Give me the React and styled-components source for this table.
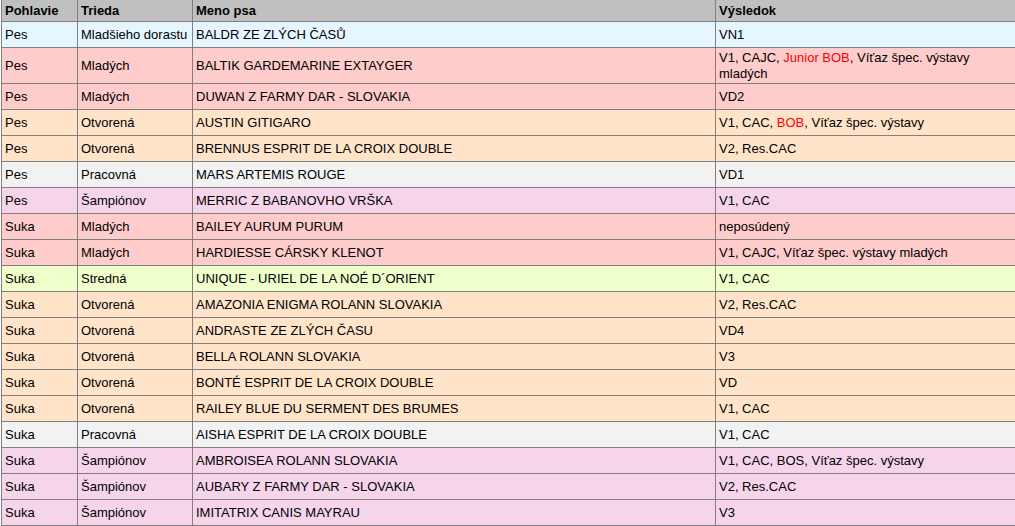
import React from "react";
import styled, { createGlobalStyle } from "styled-components";

const GlobalStyle = createGlobalStyle`
  html, body {
    margin: 0;
    padding: 0;
    background: #ffffff;
    overflow: hidden;
  }
  body {
    font-family: "Liberation Sans", Arial, sans-serif;
    font-size: 13px;
    color: #000;
  }
`;

const Wrapper = styled.div`
  padding-left: 1px;
  margin-top: -1px;
`;

const Table = styled.table`
  border-collapse: collapse;
  table-layout: fixed;
  width: 1016px;
`;

const HeadCell = styled.th`
  background-color: #c0c0c0;
  border: 1px solid #808080;
  text-align: left;
  font-weight: bold;
  padding: 2px 3px;
  height: 17px;
  line-height: 15px;
`;

const Row = styled.tr`
  background-color: ${(props) => props.$bg};
`;

const Cell = styled.td`
  border: 1px solid #808080;
  padding: 2px 3px;
  height: 21px;
  line-height: 15.5px;
  vertical-align: middle;
`;

const Red = styled.span`
  color: #ff0000;
`;

const colors = {
  blue: "#e5f6ff",
  pink: "#ffcccc",
  orange: "#ffe4ca",
  gray: "#f2f2f2",
  lilac: "#f6d5eb",
  green: "#efffcc",
};

const classColor = {
  "Mladšieho dorastu": colors.blue,
  "Mladých": colors.pink,
  "Otvorená": colors.orange,
  "Pracovná": colors.gray,
  "Šampiónov": colors.lilac,
  "Stredná": colors.green,
};

const rows = [
  ["Pes", "Mladšieho dorastu", "BALDR ZE ZLÝCH ČASŮ", "VN1"],
  ["Pes", "Mladých", "BALTIK GARDEMARINE EXTAYGER", <>V1, CAJC, <Red>Junior BOB</Red>, Víťaz špec. výstavy mladých</>],
  ["Pes", "Mladých", "DUWAN Z FARMY DAR - SLOVAKIA", "VD2"],
  ["Pes", "Otvorená", "AUSTIN GITIGARO", <>V1, CAC, <Red>BOB</Red>, Víťaz špec. výstavy</>],
  ["Pes", "Otvorená", "BRENNUS ESPRIT DE LA CROIX DOUBLE", "V2, Res.CAC"],
  ["Pes", "Pracovná", "MARS ARTEMIS ROUGE", "VD1"],
  ["Pes", "Šampiónov", "MERRIC Z BABANOVHO VRŠKA", "V1, CAC"],
  ["Suka", "Mladých", "BAILEY AURUM PURUM", "neposúdený"],
  ["Suka", "Mladých", "HARDIESSE CÁRSKY KLENOT", "V1, CAJC, Víťaz špec. výstavy mladých"],
  ["Suka", "Stredná", "UNIQUE - URIEL DE LA NOÉ D´ORIENT", "V1, CAC"],
  ["Suka", "Otvorená", "AMAZONIA ENIGMA ROLANN SLOVAKIA", "V2, Res.CAC"],
  ["Suka", "Otvorená", "ANDRASTE ZE ZLÝCH ČASU", "VD4"],
  ["Suka", "Otvorená", "BELLA ROLANN SLOVAKIA", "V3"],
  ["Suka", "Otvorená", "BONTÉ ESPRIT DE LA CROIX DOUBLE", "VD"],
  ["Suka", "Otvorená", "RAILEY BLUE DU SERMENT DES BRUMES", "V1, CAC"],
  ["Suka", "Pracovná", "AISHA ESPRIT DE LA CROIX DOUBLE", "V1, CAC"],
  ["Suka", "Šampiónov", "AMBROISEA ROLANN SLOVAKIA", "V1, CAC, BOS, Víťaz špec. výstavy"],
  ["Suka", "Šampiónov", "AUBARY Z FARMY DAR - SLOVAKIA", "V2, Res.CAC"],
  ["Suka", "Šampiónov", "IMITATRIX CANIS MAYRAU", "V3"],
];

const App = () => {
  return (
    <Wrapper>
      <GlobalStyle />
      <Table>
        <colgroup>
          <col style={{ width: 76 }} />
          <col style={{ width: 115 }} />
          <col style={{ width: 523 }} />
          <col />
        </colgroup>
        <thead>
          <tr>
            <HeadCell>Pohlavie</HeadCell>
            <HeadCell>Trieda</HeadCell>
            <HeadCell>Meno psa</HeadCell>
            <HeadCell>Výsledok</HeadCell>
          </tr>
        </thead>
        <tbody>
          {rows.map((r, i) => (
            <Row key={i} $bg={classColor[r[1]]}>
              <Cell>{r[0]}</Cell>
              <Cell>{r[1]}</Cell>
              <Cell>{r[2]}</Cell>
              <Cell>{r[3]}</Cell>
            </Row>
          ))}
        </tbody>
      </Table>
    </Wrapper>
  );
};

export default App;
